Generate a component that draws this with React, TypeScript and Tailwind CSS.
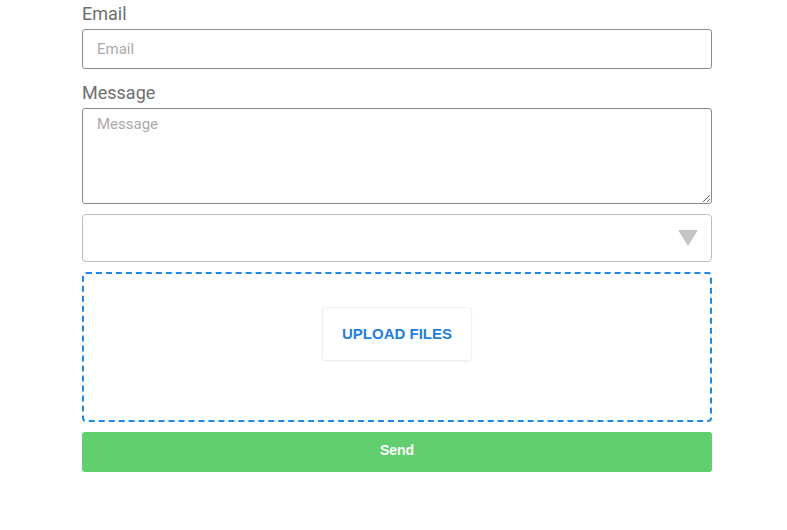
import React from "react";

export default function App() {
  return (
    <div className="w-[787px] h-[530px] bg-white" style={{ fontFamily: "Roboto, 'Liberation Sans', sans-serif" }}>
      <div className="ml-[82px] w-[630px] pt-[2px] flex flex-col">
        <label className="text-[18px] leading-[24px] text-[#6e6e6e] mb-[3px]">Email</label>
        <input
          placeholder="Email"
          className="h-[40px] w-full rounded-[3px] border border-[#8a8a8a] px-[14px] text-[15px] text-[#444] placeholder:text-[#aaaaaa] outline-none"
        />
        <label className="text-[18px] leading-[24px] text-[#6e6e6e] mt-[12px] mb-[3px]">Message</label>
        <textarea
          placeholder="Message"
          className="h-[96px] w-full rounded-[3px] border border-[#8a8a8a] px-[14px] pt-[4px] text-[15px] text-[#444] placeholder:text-[#aaaaaa] outline-none resize-y"
        />
        <div className="mt-[10px] h-[48px] w-full rounded-[4px] border border-[#bdbdbd] flex items-center justify-end pr-[13px]">
          <svg width="20" height="16" viewBox="0 0 20 16">
            <polygon points="0,0 20,0 10,16" fill="#c4c4c4" />
          </svg>
        </div>
        <div className="mt-[10px] h-[150px] w-full rounded-[4px] border-2 border-dashed border-[#1e88e5] flex items-start justify-center pt-[33px]">
          <button
            className="w-[150px] h-[54px] rounded-[4px] border border-[#f0f0f0] bg-white shadow-[0_1px_2px_rgba(0,0,0,0.05)] text-[#1e7fe0] font-bold text-[15px]"
            style={{ fontFamily: "'Liberation Sans', Arial, sans-serif" }}
          >
            UPLOAD FILES
          </button>
        </div>
        <button
          className="mt-[10px] h-[40px] w-full rounded-[3px] bg-[#62cf6f] text-white font-bold text-[14px] pb-[3px]"
          style={{ fontFamily: "'Liberation Sans', Arial, sans-serif" }}
        >
          Send
        </button>
      </div>
    </div>
  );
}
